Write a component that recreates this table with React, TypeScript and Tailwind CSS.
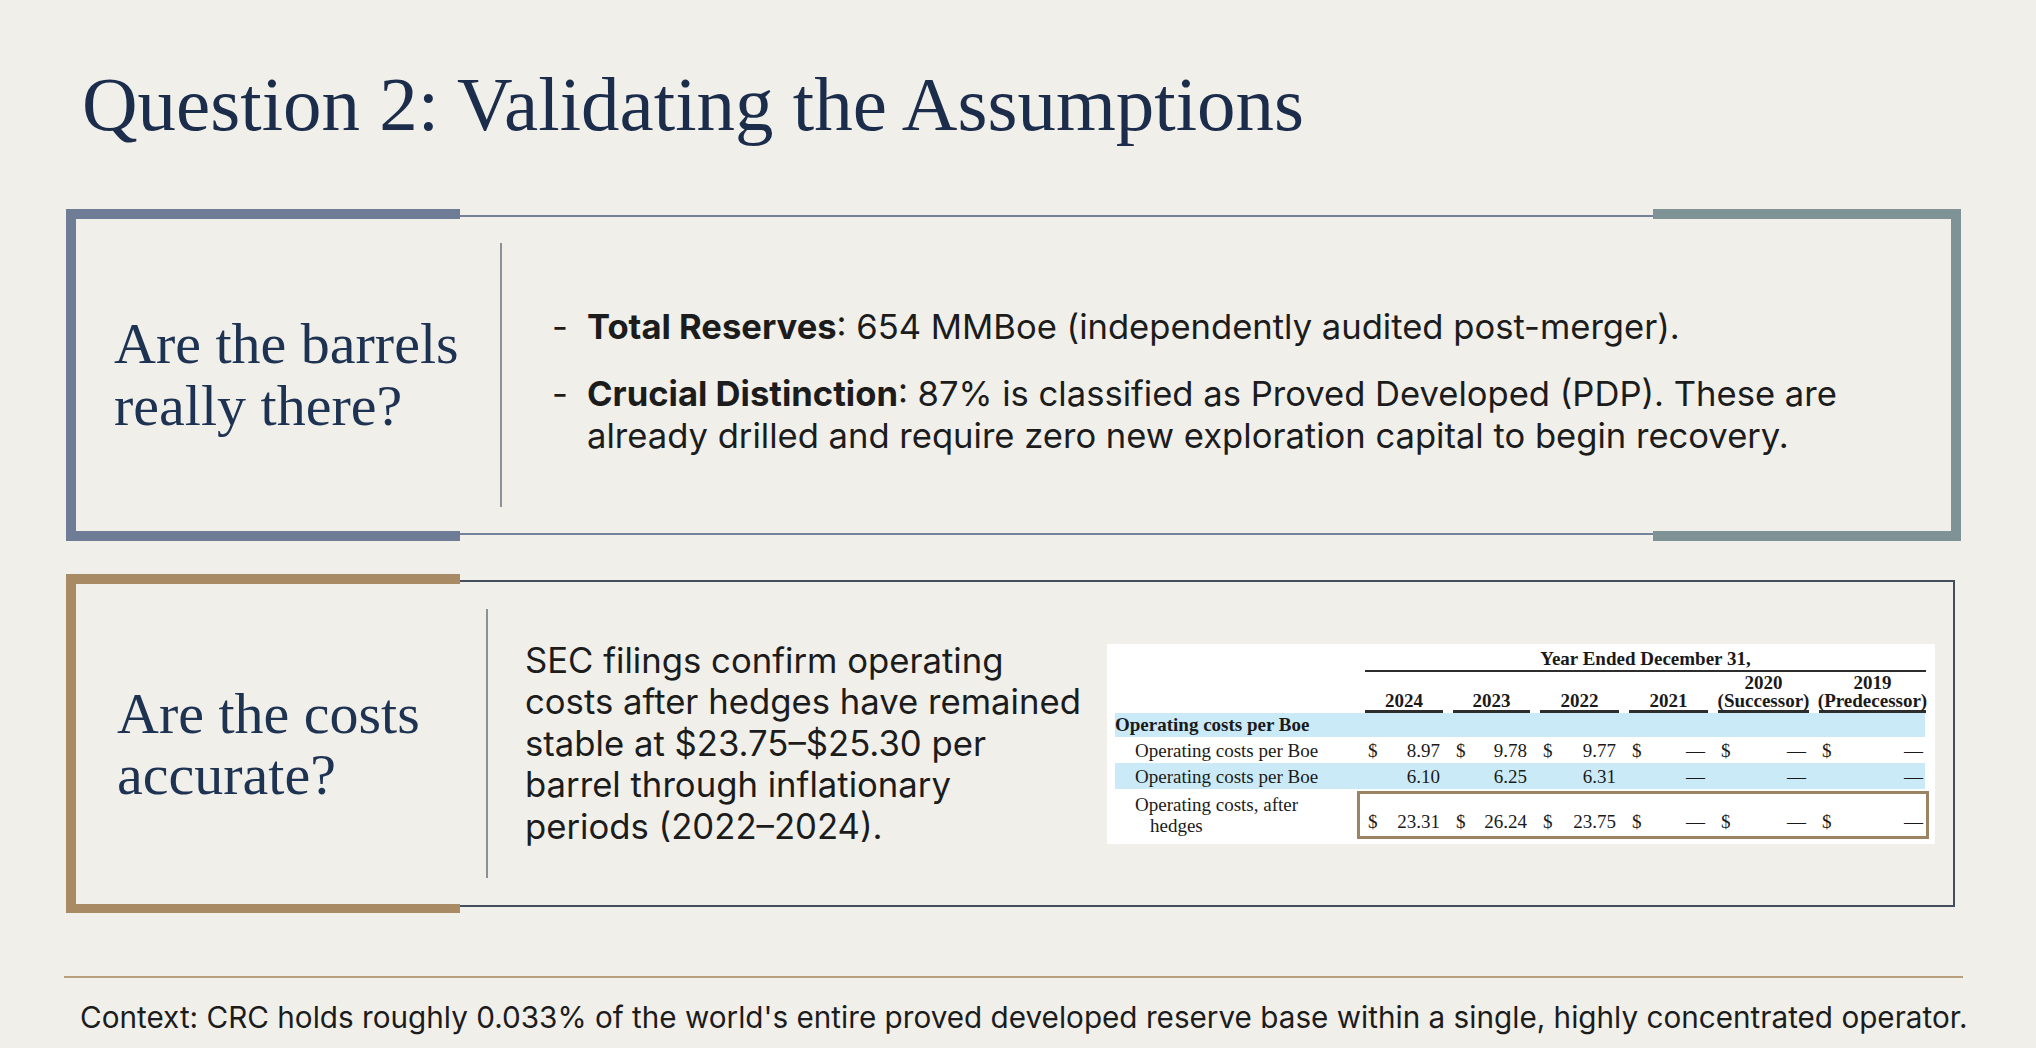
import React from 'react';

const serif = "font-['Liberation_Serif','Times_New_Roman',serif]";
const sans = "font-['Inter','Liberation_Sans',sans-serif]";

const years = [
  { top: '', label: '2024' },
  { top: '', label: '2023' },
  { top: '', label: '2022' },
  { top: '', label: '2021' },
  { top: '2020', label: '(Successor)' },
  { top: '2019', label: '(Predecessor)' },
];

const gridCols = 'grid grid-cols-[240px_78px_77px_79px_79px_91px_107px] gap-x-[10px]';

type Cell = { dollar?: boolean; value: string };

const ValueCell: React.FC<{ cell: Cell }> = ({ cell }) => (
  <div className="flex items-end justify-between px-[3px]">
    <span>{cell.dollar ? '$' : ''}</span>
    <span>{cell.value}</span>
  </div>
);

const rowOne: Cell[] = [
  { dollar: true, value: '8.97' },
  { dollar: true, value: '9.78' },
  { dollar: true, value: '9.77' },
  { dollar: true, value: '—' },
  { dollar: true, value: '—' },
  { dollar: true, value: '—' },
];

const rowTwo: Cell[] = [
  { value: '6.10' },
  { value: '6.25' },
  { value: '6.31' },
  { value: '—' },
  { value: '—' },
  { value: '—' },
];

const rowHedged: Cell[] = [
  { dollar: true, value: '23.31' },
  { dollar: true, value: '26.24' },
  { dollar: true, value: '23.75' },
  { dollar: true, value: '—' },
  { dollar: true, value: '—' },
  { dollar: true, value: '—' },
];

const CostTable = () => (
  <div className={`h-[200px] w-[828px] bg-white pl-[8px] pr-[10px] pt-[4px] text-[19px] leading-[24px] text-[#1a1a1a] ${serif}`}>
    {/* header */}
    <div className={gridCols}>
      <div />
      <div className="col-span-6 border-b-2 border-[#2d2d2d] text-center font-bold leading-[22px]">Year Ended December 31,</div>
    </div>
    <div className={`${gridCols} mt-[1px]`}>
      <div />
      {years.map((y) => (
        <div key={y.label} className="flex h-[40px] flex-col items-center justify-end border-b-[3px] border-[#2d2d2d] font-bold leading-[18px]">
          {y.top && <span>{y.top}</span>}
          <span>{y.label}</span>
        </div>
      ))}
    </div>

    <div className="flex h-[24px] items-end bg-[#cbeaf8] font-bold">Operating costs per Boe</div>
    <div className={`${gridCols} h-[26px] items-end`}>
      <div className="pl-[20px]">Operating costs per Boe</div>
      {rowOne.map((c, i) => (
        <ValueCell key={i} cell={c} />
      ))}
    </div>
    <div className={`${gridCols} h-[26px] items-end bg-[#cbeaf8]`}>
      <div className="pl-[20px]">Operating costs per Boe</div>
      {rowTwo.map((c, i) => (
        <ValueCell key={i} cell={c} />
      ))}
    </div>
    <div className={`${gridCols} h-[51px]`}>
      <div className="self-end pb-[4px] pl-[20px] leading-[21px]">
        Operating costs, after
        <br />
        <span className="pl-[15px]">hedges</span>
      </div>
      <div className="relative col-span-6 grid grid-cols-[78px_77px_79px_79px_91px_107px] items-end gap-x-[10px] pb-[6px]">
        <div className="pointer-events-none absolute -left-[8px] -right-[3px] top-[2px] bottom-[1px] border-[3px] border-[#9b8363]" />
        {rowHedged.map((c, i) => (
          <ValueCell key={i} cell={c} />
        ))}
      </div>
    </div>
  </div>
);

export default function App() {
  return (
    <div className={`relative h-[1048px] w-[2036px] overflow-hidden bg-[#f0efea] ${sans}`}>
      <h1 className={`pl-[82px] pt-[66px] text-[77px] leading-[77px] text-[#1b2d4b] ${serif}`}>
        Question 2: Validating the Assumptions
      </h1>

      {/* Card 1: reserves */}
      <section className="relative ml-[72px] mt-[72px] h-[320px] w-[1883px] border-2 border-[#75839a]">
        <div className="absolute -left-[8px] -top-[8px] -bottom-[8px] w-[394px] border-l-[10px] border-t-[10px] border-b-[10px] border-[#6e7c96]" />
        <div className="absolute -right-[8px] -top-[8px] -bottom-[8px] w-[308px] border-r-[10px] border-t-[10px] border-b-[10px] border-[#7f9396]" />
        <div className="flex h-full">
          <div className="flex w-[426px] items-center pl-[40px]">
            <h2 className={`text-[58px] leading-[62px] text-[#1e3252] ${serif}`}>
              Are the barrels
              <br />
              really there?
            </h2>
          </div>
          <div className="my-[26px] w-[2px] bg-[#8b9099]" />
          <div className="flex flex-1 flex-col justify-center gap-[25px] pl-[50px] pt-[10px] text-[34.6px] leading-[42px] text-[#1c1c1c]">
            <div className="flex">
              <span className="w-[35px] shrink-0">-</span>
              <p>
                <span className="font-bold">Total Reserves</span>: 654 MMBoe (independently audited post-merger).
              </p>
            </div>
            <div className="flex">
              <span className="w-[35px] shrink-0">-</span>
              <p>
                <span className="font-bold">Crucial Distinction</span>: 87% is classified as Proved Developed (PDP). These are
                <br />
                already drilled and require zero new exploration capital to begin recovery.
              </p>
            </div>
          </div>
        </div>
      </section>

      {/* Card 2: costs */}
      <section className="relative ml-[72px] mt-[45px] h-[327px] w-[1883px] border-2 border-[#434d5c]">
        <div className="absolute -left-[8px] -top-[8px] -bottom-[8px] w-[394px] border-l-[10px] border-t-[10px] border-b-[9px] border-[#a88a64]" />
        <div className="flex h-full items-stretch">
          <div className="flex w-[412px] items-center pl-[43px]">
            <h2 className={`text-[58px] leading-[61px] text-[#1e3252] ${serif}`}>
              Are the costs
              <br />
              accurate?
            </h2>
          </div>
          <div className="my-[27px] w-[2px] bg-[#8b9099]" />
          <div className="flex flex-1 items-center pr-[18px]">
            <p className="w-[619px] pl-[37px] text-[34.7px] leading-[41.5px] text-[#1c1c1c]">
              SEC filings confirm operating
              <br />
              costs after hedges have remained
              <br />
              stable at $23.75–$25.30 per
              <br />
              barrel through inflationary
              <br />
              periods (2022–2024).
            </p>
            <CostTable />
          </div>
        </div>
      </section>

      <div className="ml-[64px] mt-[69px] h-[2px] w-[1899px] bg-[#b8a07e]" />
      <p className="mt-[21px] pl-[80px] text-[29.7px] leading-[36px] text-[#1c1c1c]">
        Context: CRC holds roughly 0.033% of the world's entire proved developed reserve base within a single, highly concentrated operator.
      </p>
    </div>
  );
}
